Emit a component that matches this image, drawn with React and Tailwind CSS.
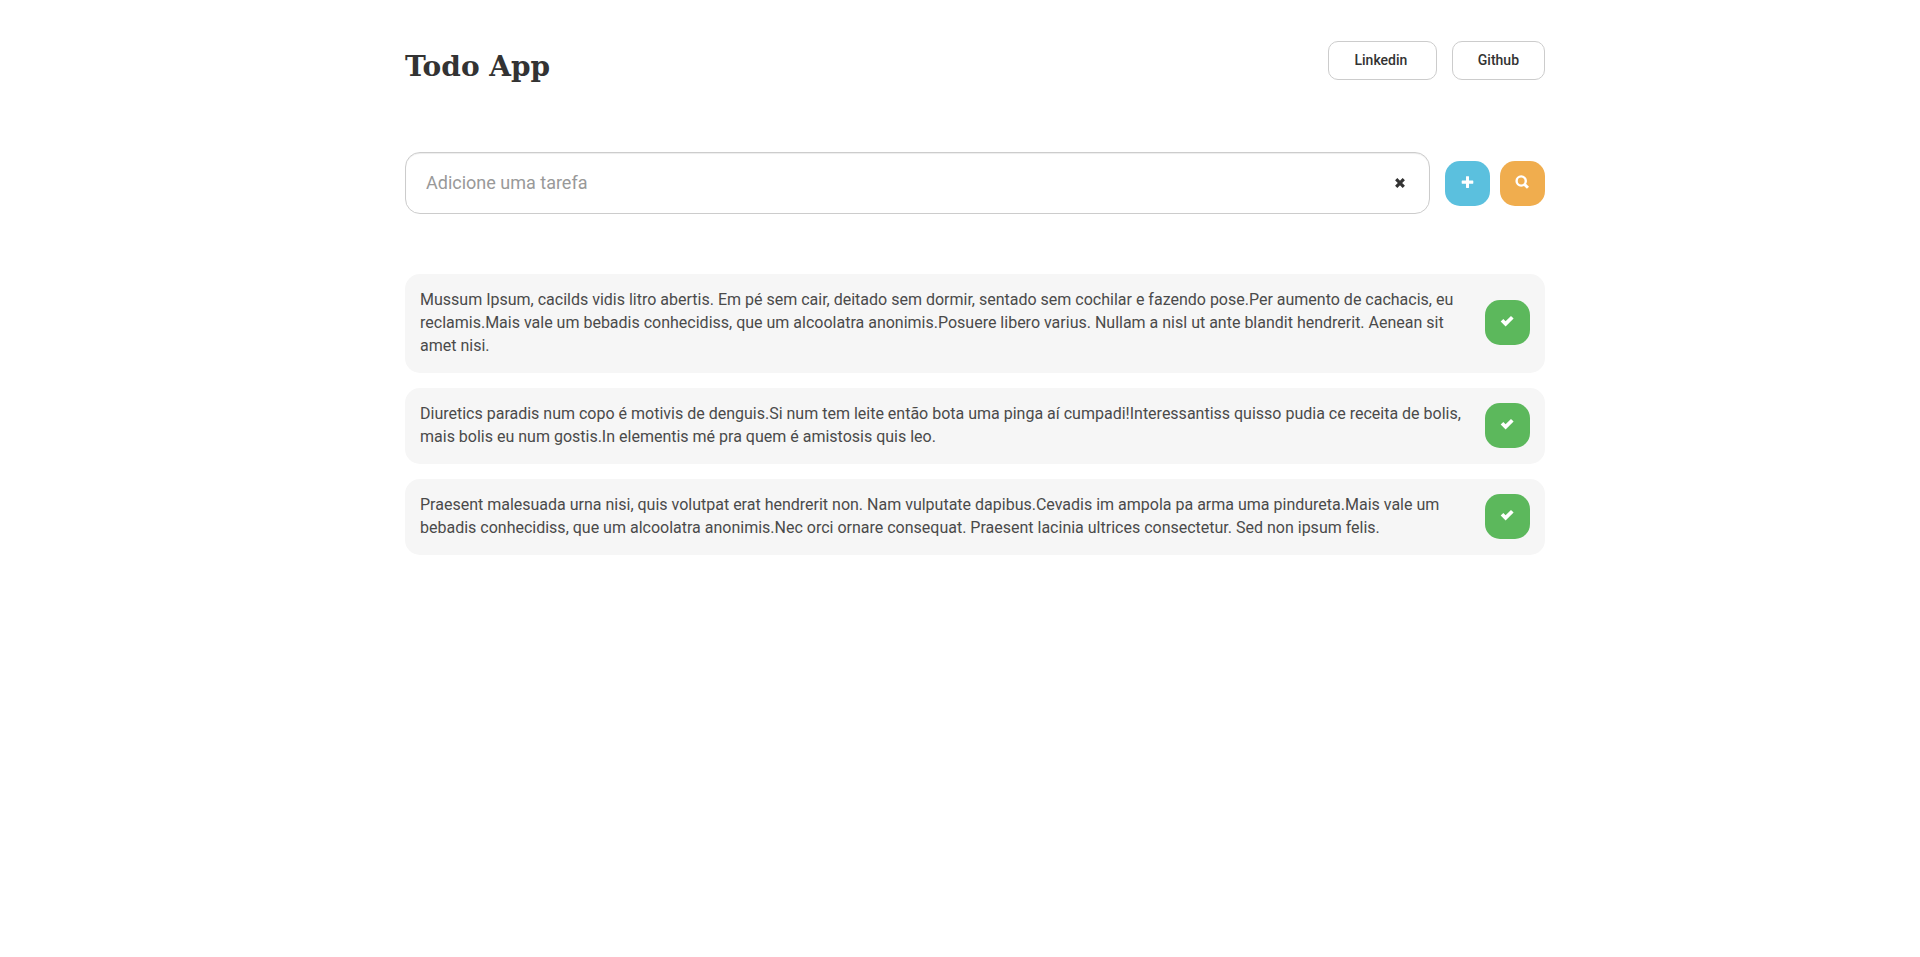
import { useState } from "react";

const initialTasks = [
  "Mussum Ipsum, cacilds vidis litro abertis. Em pé sem cair, deitado sem dormir, sentado sem cochilar e fazendo pose.Per aumento de cachacis, eu reclamis.Mais vale um bebadis conhecidiss, que um alcoolatra anonimis.Posuere libero varius. Nullam a nisl ut ante blandit hendrerit. Aenean sit amet nisi.",
  "Diuretics paradis num copo é motivis de denguis.Si num tem leite então bota uma pinga aí cumpadi!Interessantiss quisso pudia ce receita de bolis, mais bolis eu num gostis.In elementis mé pra quem é amistosis quis leo.",
  "Praesent malesuada urna nisi, quis volutpat erat hendrerit non. Nam vulputate dapibus.Cevadis im ampola pa arma uma pindureta.Mais vale um bebadis conhecidiss, que um alcoolatra anonimis.Nec orci ornare consequat. Praesent lacinia ultrices consectetur. Sed non ipsum felis.",
];

function RemoveIcon() {
  return (
    <svg viewBox="0 0 14 14" className="size-[14px]" aria-hidden="true">
      <path
        d="M3.2 3.2 10.8 10.8M10.8 3.2 3.2 10.8"
        stroke="currentColor"
        strokeWidth="3.2"
        fill="none"
      />
    </svg>
  );
}

function PlusIcon() {
  return (
    <svg viewBox="0 0 14 14" className="size-[14px]" aria-hidden="true">
      <path
        d="M6.400 1.200h2.200q.4 0 .4.4V5.500h3.900q.4 0 .4.4v2.400q0 .4-.4.4H9v3.900q0 .4-.4.4H6.400q-.4 0-.4-.4V8.700H2.100q-.4 0-.4-.4V5.900q0-.4.4-.4H6V1.600q0-.4.4-.4z"
        fill="currentColor"
      />
    </svg>
  );
}

function SearchIcon() {
  return (
    <svg viewBox="0 0 14 14" className="size-[14px]" aria-hidden="true">
      <circle cx="6.200" cy="6" r="4.600" stroke="currentColor" strokeWidth="2.400" fill="none" />
      <path d="M9.200 9 13 12.800" stroke="currentColor" strokeWidth="3" fill="none" />
    </svg>
  );
}

function CheckIcon() {
  return (
    <svg viewBox="0 0 14 14" className="size-[14px]" aria-hidden="true">
      <path
        d="M2 6.300 5.600 9.900 12.300 3.200"
        stroke="currentColor"
        strokeWidth="3.700"
        strokeLinejoin="miter"
        fill="none"
      />
    </svg>
  );
}

function SquareButton({ label, color, type = "button", onClick, children }) {
  return (
    <button
      type={type}
      aria-label={label}
      onClick={onClick}
      className={`flex size-[45px] shrink-0 items-center justify-center rounded-[15px] pr-px pb-[3px] text-white ${color}`}
    >
      {children}
    </button>
  );
}

function HeaderLink({ href, children }) {
  return (
    <a
      href={href}
      className="rounded-[10px] border border-[#ccc] bg-white px-[25px] py-[9px] text-sm leading-[19px] font-medium text-[#333]"
    >
      {children}
    </a>
  );
}

export default function App() {
  const [text, setText] = useState("");
  const [query, setQuery] = useState("");
  const [tasks, setTasks] = useState(initialTasks);

  const addTask = (event) => {
    event.preventDefault();
    if (!text.trim()) return;
    setTasks([...tasks, text.trim()]);
    setText("");
  };

  const clear = () => {
    setText("");
    setQuery("");
  };

  const visible = tasks.filter((task) => task.toLowerCase().includes(query.toLowerCase()));

  return (
    <div className="mx-auto max-w-[1170px] pl-[30px] font-[Roboto,sans-serif] text-[#333]">
      <header className="flex items-start justify-between pt-[41px]">
        <h1 className="pt-1.5 font-['Broadway','DejaVu_Serif',serif] text-[28px] leading-10 font-bold">
          Todo App
        </h1>
        <nav className="flex gap-[15px]">
          <HeaderLink href="#linkedin">Linkedin&nbsp;</HeaderLink>
          <HeaderLink href="#github">Github</HeaderLink>
        </nav>
      </header>

      <main>
        <form onSubmit={addTask} className="mt-[65px] flex items-center gap-[15px]">
          <div className="flex h-[62px] grow items-center rounded-[15px] border border-[#ccc] bg-white pr-[18px] pl-5 shadow-[inset_0_1px_1px_rgba(0,0,0,0.075)]">
            <input
              type="text"
              aria-label="Adicione uma tarefa"
              placeholder="Adicione uma tarefa"
              value={text}
              onChange={(event) => setText(event.target.value)}
              className="min-w-0 grow bg-transparent text-lg outline-none placeholder:text-[#999]"
            />
            <button type="button" aria-label="Limpar" onClick={clear} className="p-1">
              <RemoveIcon />
            </button>
          </div>
          <div className="flex gap-[10px]">
            <SquareButton type="submit" label="Adicionar" color="bg-[#5bc0de]">
              <PlusIcon />
            </SquareButton>
            <SquareButton label="Buscar" color="bg-[#f0ad4e]" onClick={() => setQuery(text)}>
              <SearchIcon />
            </SquareButton>
          </div>
        </form>

        <ul className="mt-[60px] flex flex-col gap-[15px]">
          {visible.map((task) => (
            <li
              key={task}
              className="flex items-center justify-between gap-5 rounded-[15px] bg-[#f6f6f6] px-[15px] pt-[14px] pb-4"
            >
              <p className="text-base leading-[23px] text-[#4a4a4a]">{task}</p>
              <SquareButton
                label="Concluir tarefa"
                color="bg-[#5cb85c]"
                onClick={() => setTasks(tasks.filter((other) => other !== task))}
              >
                <CheckIcon />
              </SquareButton>
            </li>
          ))}
        </ul>
      </main>
    </div>
  );
}
